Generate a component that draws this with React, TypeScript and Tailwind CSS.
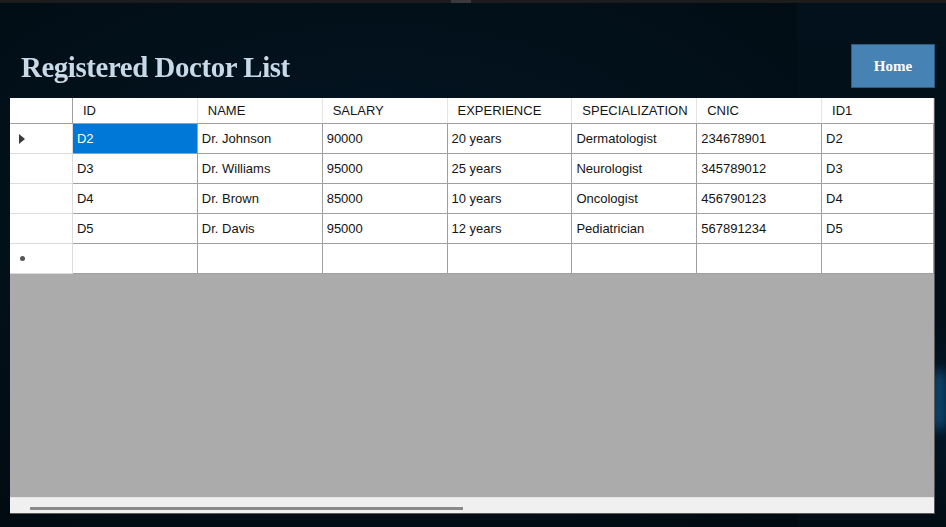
import React from "react";

const columns = ["ID", "NAME", "SALARY", "EXPERIENCE", "SPECIALIZATION", "CNIC", "ID1"];

const doctors = [
  ["D2", "Dr. Johnson", "90000", "20 years", "Dermatologist", "234678901", "D2"],
  ["D3", "Dr. Williams", "95000", "25 years", "Neurologist", "345789012", "D3"],
  ["D4", "Dr. Brown", "85000", "10 years", "Oncologist", "456790123", "D4"],
  ["D5", "Dr. Davis", "95000", "12 years", "Pediatrician", "567891234", "D5"],
];

const colWidth = (i: number) => (i === columns.length - 1 ? "w-[112px]" : "w-[125px]");

export default function App() {
  return (
    <div className="relative w-[946px] h-[527px] overflow-hidden bg-[radial-gradient(ellipse_at_40%_40%,#041624_0%,#020f18_55%,#01080d_100%)] font-['Liberation_Sans',sans-serif]">
      {/* top strip */}
      <div className="flex h-[3px] bg-[#1c1c1c]">
        <div className="ml-[451px] w-[20px] bg-[#3a3a3a]" />
      </div>
      <div className="absolute left-[797px] top-[3px] w-[149px] h-[524px] bg-[linear-gradient(180deg,#02111b_0%,#020e17_60%,#03182a_78%,#020c13_100%)]" />
      <div className="absolute right-0 top-[370px] w-[14px] h-[60px] rounded-full bg-[#0d4a75] blur-[6px]" />

      <div className="relative flex items-end justify-between pl-[21px] pr-[11px] h-[95px]">
        <h1 className="pb-[16px] text-[30px] leading-none font-bold text-[#c9d9e8] tracking-[-0.4px] font-['Liberation_Serif',serif] scale-x-[0.96] origin-left">
          Registered Doctor List
        </h1>
        <button className="mb-[10px] w-[84px] h-[44px] bg-[#4682b4] border border-[#2c5a80] text-white text-[15px] font-bold font-['Liberation_Serif',serif]">
          Home
        </button>
      </div>

      {/* data grid */}
      <div className="relative ml-[10px] w-[925px] h-[416px] flex flex-col border-r border-b border-[#5a5a5a] bg-[#ababab] text-[13px] text-[#141414]">
        <div className="flex h-[26px] bg-white border-b border-[#a0a0a0]">
          <div className="w-[63px] border-r border-[#a0a0a0]" />
          {columns.map((c, i) => (
            <div
              key={c}
              className={`${colWidth(i)} flex items-center pl-[10px] border-r border-[#e4e4e4]`}
            >
              {c}
            </div>
          ))}
        </div>

        {doctors.map((row, r) => (
          <div key={r} className="flex h-[30px]">
            <div className="w-[63px] flex items-center pl-[9px] bg-white border-r border-[#a0a0a0] border-b border-[#dcdcdc]">
              {r === 0 && (
                <svg width="6" height="10" viewBox="0 0 6 10">
                  <path d="M0 0 L6 5 L0 10 Z" fill="#3a3a3a" />
                </svg>
              )}
            </div>
            {row.map((v, i) => (
              <div
                key={i}
                className={`${colWidth(i)} flex items-center pl-[4px] border-r border-b border-[#a0a0a0] ${
                  r === 0 && i === 0 ? "bg-[#0078d7] text-white" : "bg-white"
                }`}
              >
                {v}
              </div>
            ))}
          </div>
        ))}

        <div className="flex h-[30px]">
          <div className="w-[63px] flex items-center pl-[10px] bg-white border-r border-[#a0a0a0] border-b border-[#dcdcdc]">
            <span className="w-[5px] h-[5px] rounded-full bg-[#555]" />
          </div>
          {columns.map((c, i) => (
            <div key={c} className={`${colWidth(i)} bg-white border-r border-b border-[#a0a0a0]`} />
          ))}
        </div>

        <div className="flex-1" />

        <div className="h-[16px] bg-[#f0f0f0] border-t border-[#e6e6e6] flex items-center pl-[20px]">
          <div className="mt-[5px] w-[433px] h-[3px] bg-[#8a8a8a]" />
        </div>
      </div>
    </div>
  );
}
